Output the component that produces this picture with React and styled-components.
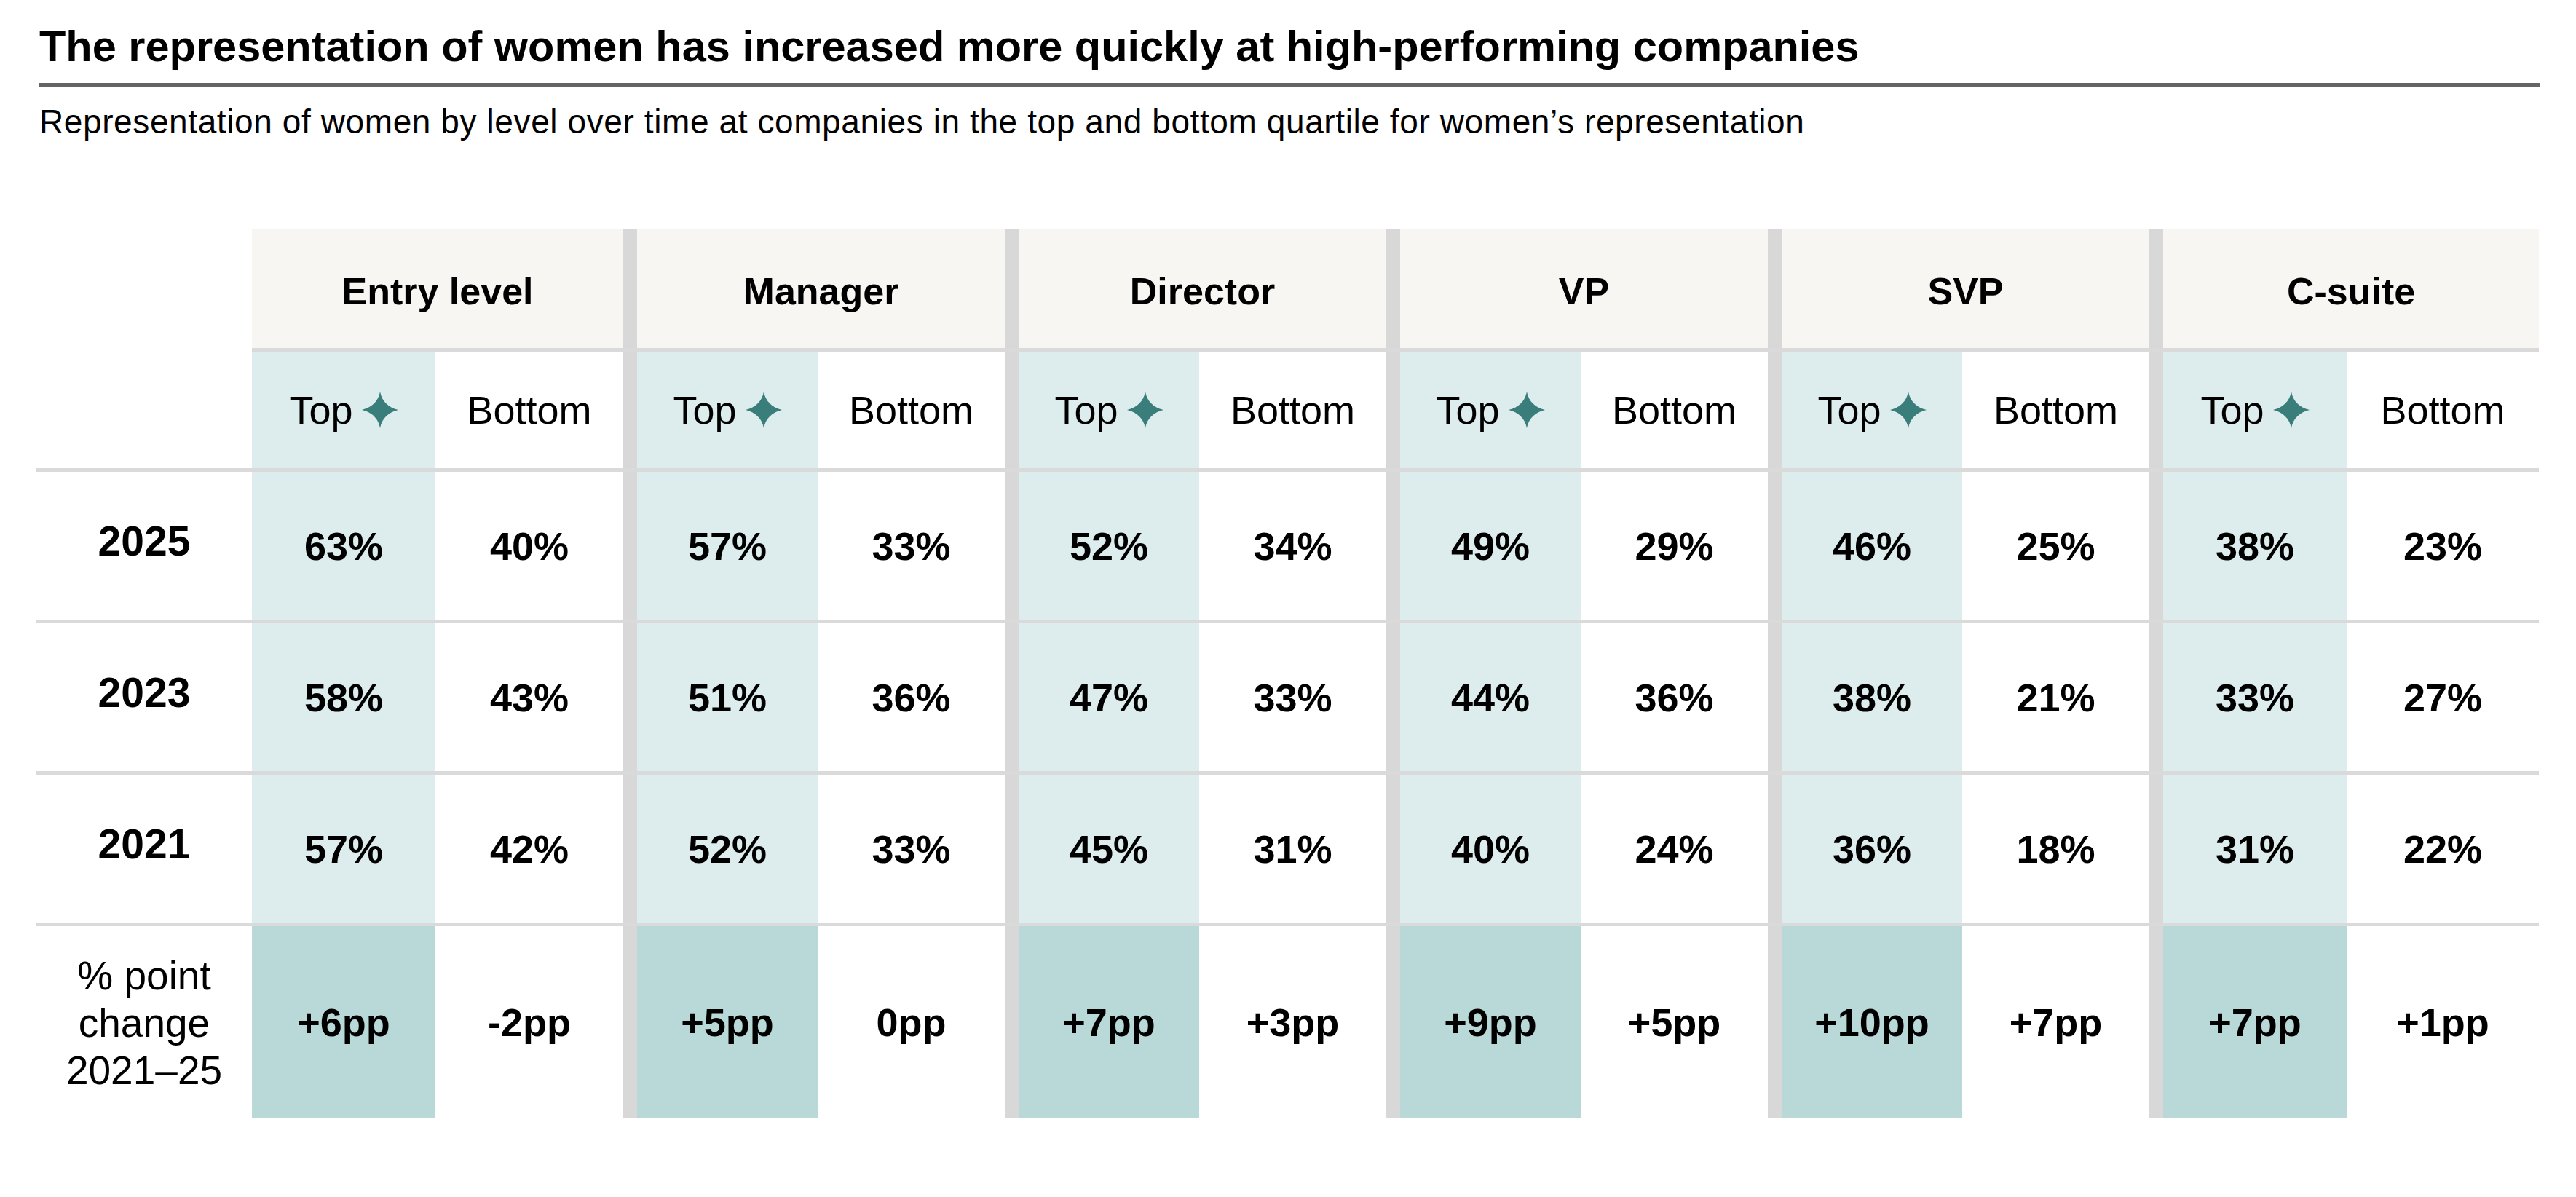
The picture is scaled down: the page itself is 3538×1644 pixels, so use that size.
import React from 'react';
import styled, { createGlobalStyle } from 'styled-components';

const GlobalStyle = createGlobalStyle`
  html, body {
    margin: 0;
    padding: 0;
    background: #ffffff;
  }

  body {
    font-family: "Liberation Sans", Arial, sans-serif;
    color: #000000;
  }
`;

const LEVELS = ['Entry level', 'Manager', 'Director', 'VP', 'SVP', 'C-suite'];

// [top, bottom] column widths of each level, measured off the chart
const WIDTHS = [
  [252, 258],
  [248, 257],
  [248, 257],
  [248, 257],
  [248, 257],
  [252, 264],
];

const ROWS = [
  { label: '2025', values: [[63, 40], [57, 33], [52, 34], [49, 29], [46, 25], [38, 23]] },
  { label: '2023', values: [[58, 43], [51, 36], [47, 33], [44, 36], [38, 21], [33, 27]] },
  { label: '2021', values: [[57, 42], [52, 33], [45, 31], [40, 24], [36, 18], [31, 22]] },
];

const CHANGES = [[6, -2], [5, 0], [7, 3], [9, 5], [10, 7], [7, 1]];

const columnTemplate = ['296px']
  .concat(WIDTHS.map(([top, bottom]) => `${top}px ${bottom}px`).join(' 19px ').split(' '))
  .join(' ');

const Page = styled.main`
  padding: 34px 0 120px 50px;
`;

const Heading = styled.header`
  width: 3435px;
  margin-left: 4px;
`;

const Title = styled.h1`
  margin: 0;
  padding-bottom: 21px;
  font-size: 59.5px;
  line-height: 59px;
  font-weight: 700;
  letter-spacing: 0;
  border-bottom: 5px solid #656565;
`;

const Subtitle = styled.p`
  margin: 25px 0 0;
  font-size: 46px;
  line-height: 46px;
  letter-spacing: 0.6px;
  font-weight: 400;
`;

const Table = styled.section`
  display: grid;
  grid-template-columns: ${columnTemplate};
  grid-template-rows: 163px 5px 160px 5px 203px 5px 203px 5px 203px 5px 263px;
  margin-top: 125px;
`;

const Blank = styled.div`
  background: #ffffff;
`;

const Divider = styled.div`
  background: #d8d8d8;
`;

const Rule = styled.div`
  grid-column: ${(p) => (p.indent ? '2 / -1' : '1 / -1')};
  background: #dadada;
`;

const GroupHead = styled.div`
  grid-column: span 2;
  display: flex;
  align-items: center;
  justify-content: center;
  padding-top: 6px;
  background: #f7f6f2;
  font-size: 52px;
  font-weight: 700;
`;

const SubHead = styled.div`
  display: flex;
  align-items: center;
  justify-content: center;
  gap: 12px;
  background: ${(p) => (p.top ? '#ddeced' : '#ffffff')};
  font-size: 54px;
  font-weight: 400;
`;

const RowLabel = styled.div`
  display: flex;
  align-items: center;
  justify-content: center;
  padding-bottom: ${(p) => (p.multiline ? '0' : '12px')};
  padding-top: ${(p) => (p.multiline ? '4px' : '0')};
  font-size: ${(p) => (p.multiline ? '55px' : '57px')};
  line-height: ${(p) => (p.multiline ? '65px' : '1')};
  font-weight: ${(p) => (p.multiline ? 400 : 700)};
  text-align: center;
`;

const Value = styled.div`
  display: flex;
  align-items: center;
  justify-content: center;
  font-size: 54px;
  font-weight: 700;
  background: ${(p) => {
    if (!p.top) return '#ffffff';
    return p.change ? '#b9d8d8' : '#ddeced';
  }};
`;

const Sparkle = () => (
  <svg width="50" height="50" viewBox="0 0 24 24" aria-hidden="true">
    <path
      d="M12 0 C13.2 6.2 17.2 10.4 24 12 C17.2 13.6 13.2 17.8 12 24 C10.8 17.8 6.8 13.6 0 12 C6.8 10.4 10.8 6.2 12 0 Z"
      fill="#3a7e7b"
    />
  </svg>
);

const fmtChange = (n) => (n > 0 ? `+${n}pp` : `${n}pp`);

const withDividers = (cells, key) =>
  cells.flatMap((pair, i) => (i < cells.length - 1 ? [...pair, <Divider key={`${key}-d${i}`} />] : pair));

export default function App() {
  const headerCells = LEVELS.map((name, i) => {
    const cell = <GroupHead key={`h-${name}`}>{name}</GroupHead>;
    return i < LEVELS.length - 1 ? [cell, <Divider key={`h-d${i}`} />] : [cell];
  }).flat();

  const subCells = withDividers(
    LEVELS.map((name) => [
      <SubHead key={`s-${name}-t`} top>
        Top
        <Sparkle />
      </SubHead>,
      <SubHead key={`s-${name}-b`}>Bottom</SubHead>,
    ]),
    's'
  );

  return (
    <>
      <GlobalStyle />
      <Page>
        <Heading>
          <Title>The representation of women has increased more quickly at high-performing companies</Title>
          <Subtitle>
            Representation of women by level over time at companies in the top and bottom quartile for women’s
            representation
          </Subtitle>
        </Heading>

        <Table>
          <Blank />
          {headerCells}

          <Blank />
          <Rule indent />

          <Blank />
          {subCells}

          {ROWS.map((row) => (
            <React.Fragment key={row.label}>
              <Rule />
              <RowLabel>{row.label}</RowLabel>
              {withDividers(
                row.values.map(([top, bottom], i) => [
                  <Value key={`${row.label}-${i}-t`} top>{top}%</Value>,
                  <Value key={`${row.label}-${i}-b`}>{bottom}%</Value>,
                ]),
                row.label
              )}
            </React.Fragment>
          ))}

          <Rule />
          <RowLabel multiline>
            % point
            <br />
            change
            <br />
            2021–25
          </RowLabel>
          {withDividers(
            CHANGES.map(([top, bottom], i) => [
              <Value key={`c-${i}-t`} top change>{fmtChange(top)}</Value>,
              <Value key={`c-${i}-b`}>{fmtChange(bottom)}</Value>,
            ]),
            'c'
          )}
        </Table>
      </Page>
    </>
  );
}
